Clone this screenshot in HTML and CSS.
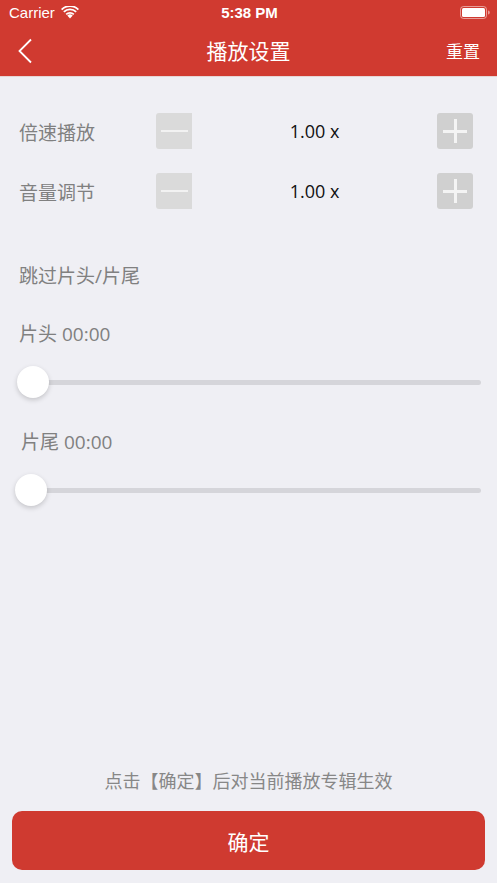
FILE: index.html
```html
<!DOCTYPE html>
<html lang="zh-CN">
<head>
    <meta charset="UTF-8">
    <meta name="viewport" content="width=device-width, initial-scale=1.0">
    <title>播放设置</title>
    <link rel="stylesheet" href="styles.css">
</head>
<body>
    <div class="page">
        <div class="header">
            <div class="statusbar">
                <div class="status-left">
                    <span>Carrier</span>
                    <svg class="wifi" width="18" height="13" viewBox="0 0 18 13">
                        <path d="M9 12.5 L6.3 9.6 A3.9 3.9 0 0 1 11.7 9.6 Z" fill="#fff"/>
                        <path d="M4.6 7.8 A6.3 6.3 0 0 1 13.4 7.8 L12.2 9.1 A4.6 4.6 0 0 0 5.8 9.1 Z" fill="#fff"/>
                        <path d="M2.2 5.3 A9.6 9.6 0 0 1 15.8 5.3 L14.5 6.6 A7.8 7.8 0 0 0 3.5 6.6 Z" fill="#fff"/>
                        <path d="M0 2.9 A12.8 12.8 0 0 1 18 2.9 L16.7 4.2 A11 11 0 0 0 1.3 4.2 Z" fill="#fff"/>
                    </svg>
                </div>
                <div class="status-time">5:38 PM</div>
                <div class="status-right">
                    <svg width="30" height="13" viewBox="0 0 30 13">
                        <rect x="0.5" y="0.5" width="26" height="12" rx="3" fill="none" stroke="#fff" stroke-opacity="0.5"/>
                        <rect x="2" y="2" width="23" height="9" rx="1.5" fill="#fff"/>
                        <path d="M28 4.5 v4 a1.8 2 0 0 0 0 -4z" fill="#fff" fill-opacity="0.5"/>
                    </svg>
                </div>
            </div>
            <div class="navbar">
                <svg class="back" width="16" height="26" viewBox="0 0 16 26">
                    <path d="M14 1.5 L2.5 13 L14 24.5" fill="none" stroke="#fff" stroke-width="1.8"/>
                </svg>
                <div class="nav-title">播放设置</div>
                <div class="nav-action">重置</div>
            </div>
        </div>

        <div class="content">
            <div class="stepper-row">
                <div class="stepper-label">倍速播放</div>
                <div class="btn-minus"><span></span></div>
                <div class="stepper-value">1.00 x</div>
                <div class="btn-plus"><span class="h"></span><span class="v"></span></div>
            </div>
            <div class="stepper-row">
                <div class="stepper-label">音量调节</div>
                <div class="btn-minus"><span></span></div>
                <div class="stepper-value">1.00 x</div>
                <div class="btn-plus"><span class="h"></span><span class="v"></span></div>
            </div>

            <div class="section-title">跳过片头/片尾</div>

            <div class="slider-label">片头 00:00</div>
            <div class="slider">
                <div class="track"></div>
                <div class="thumb"></div>
            </div>

            <div class="slider-label second">片尾 00:00</div>
            <div class="slider second">
                <div class="track"></div>
                <div class="thumb"></div>
            </div>
        </div>

        <div class="footer">
            <div class="tip">点击【确定】后对当前播放专辑生效</div>
            <button class="confirm">确定</button>
        </div>
    </div>
</body>
</html>
```

FILE: styles.css
```css
body {
    margin: 0;
    padding: 0;
    background-color: #efeff4;
    font-family: "Noto Sans CJK SC", "Noto Sans", sans-serif;
}
.page {
    height: 883px;
    display: flex;
    flex-direction: column;
}
.header {
    background-color: #d03a30;
    color: white;
    border-bottom: 1px solid #e6d5d4;
}
.statusbar {
    height: 28px;
    display: flex;
    align-items: center;
    justify-content: space-between;
    padding: 0 7px 0 9px;
    font-family: "Liberation Sans", Arial, sans-serif;
    font-size: 15px;
}
.status-left {
    display: flex;
    align-items: center;
    gap: 6px;
    width: 100px;
    margin-top: -4px;
}
.status-time {
    font-weight: bold;
    margin-top: -4px;
}
.status-right {
    width: 100px;
    display: flex;
    justify-content: flex-end;
    margin-top: -4px;
}
.navbar {
    height: 48px;
    display: flex;
    align-items: center;
    justify-content: space-between;
    padding: 0 17px 0 17px;
    position: relative;
}
.back {
    margin-top: -2px;
}
.nav-title {
    position: absolute;
    left: 0;
    right: 0;
    text-align: center;
    font-size: 21px;
    margin-top: -4px;
    pointer-events: none;
}
.nav-action {
    font-size: 17px;
    margin-top: -4px;
}
.content {
    display: flex;
    flex-direction: column;
    padding-top: 36px;
}
.stepper-row {
    display: flex;
    align-items: center;
    height: 36px;
    margin-bottom: 24px;
    padding: 0 24px 0 19px;
}
.stepper-label {
    width: 137px;
    font-size: 19px;
    color: #808080;
}
.btn-minus {
    width: 36px;
    height: 36px;
    background-color: #dadada;
    border-radius: 3px 0 0 3px;
    display: flex;
    align-items: center;
    justify-content: center;
}
.btn-minus span {
    width: 27px;
    height: 2px;
    background-color: #f2f2f2;
}
.stepper-value {
    flex: 1;
    text-align: center;
    font-family: "Open Sans", "Noto Sans", sans-serif;
    font-size: 18px;
    color: #111;
}
.btn-plus {
    width: 36px;
    height: 36px;
    background-color: #d0d0d0;
    border-radius: 3px;
    position: relative;
}
.btn-plus .h {
    position: absolute;
    left: 6px;
    top: 16.5px;
    width: 24px;
    height: 3px;
    background-color: #f4f4f4;
}
.btn-plus .v {
    position: absolute;
    left: 16.5px;
    top: 6px;
    width: 3px;
    height: 24px;
    background-color: #f4f4f4;
}
.section-title {
    margin-top: 31px;
    padding-left: 19px;
    font-family: "Open Sans", "Noto Sans CJK SC", sans-serif;
    font-size: 19px;
    line-height: 24px;
    color: #808080;
}
.slider-label {
    margin-top: 34px;
    padding-left: 19px;
    font-family: "Open Sans", "Noto Sans CJK SC", sans-serif;
    font-size: 19px;
    line-height: 24px;
    color: #808080;
}
.slider-label.second {
    margin-top: 32px;
    padding-left: 21px;
}
.slider {
    position: relative;
    height: 32px;
    margin: 20px 16px 0 17px;
    display: flex;
    align-items: center;
}
.slider.second {
    margin-left: 15px;
}
.track {
    flex: 1;
    height: 5px;
    border-radius: 3px;
    background-color: #d5d5da;
}
.thumb {
    position: absolute;
    left: 0;
    top: 0;
    width: 32px;
    height: 32px;
    border-radius: 50%;
    background-color: white;
    box-shadow: 0 2px 5px rgba(0, 0, 0, 0.18);
}
.footer {
    margin-top: auto;
    padding: 0 12px 13px 12px;
}
.tip {
    text-align: center;
    font-size: 18px;
    line-height: 22px;
    color: #878787;
    margin-bottom: 20px;
}
.confirm {
    display: block;
    width: 100%;
    height: 59px;
    border: none;
    border-radius: 10px;
    background-color: #cf3a30;
    color: white;
    font-family: "Noto Sans CJK SC", sans-serif;
    font-size: 21px;
}
```
